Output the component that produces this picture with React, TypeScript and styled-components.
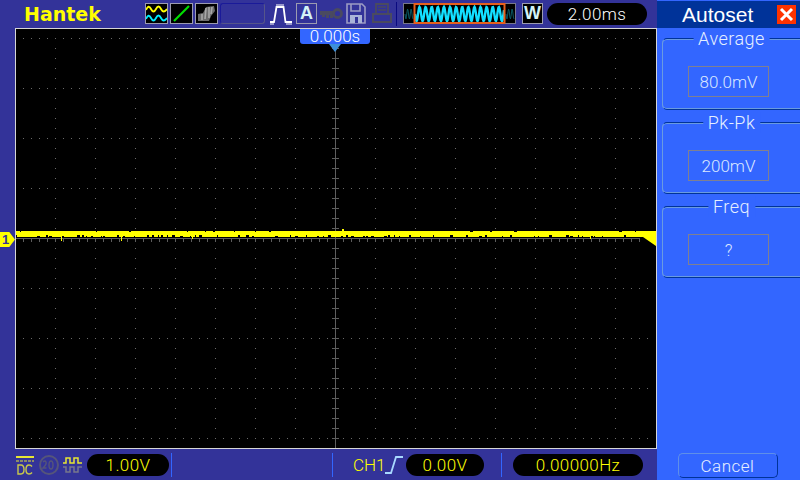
import React from 'react'
import styled, { createGlobalStyle } from 'styled-components'

const GlobalStyle = createGlobalStyle`
  html, body {
    margin: 0;
    padding: 0;
    background: #333399;
  }
  #root {
    width: 800px;
    height: 480px;
    overflow: hidden;
  }
`

const Screen = styled.div`
  display: flex;
  width: 800px;
  height: 480px;
  background: #333399;
  font-family: Roboto, sans-serif;
  font-weight: 300;
`

const Main = styled.div`
  display: flex;
  flex-direction: column;
  width: 657px;
`

const TopBar = styled.div`
  display: flex;
  align-items: center;
  height: 28px;
  padding: 0 0 1px 24px;
  box-sizing: border-box;
`

const Logo = styled.div`
  width: 121px;
  font-family: 'DejaVu Sans', sans-serif;
  font-weight: 700;
  font-size: 19px;
  color: #ffff00;
`

const IconTile = styled.div`
  display: flex;
  box-sizing: border-box;
  width: 23px;
  height: 21px;
  margin-right: 2px;
  background: #000;
  border: 1px solid #9c9cb0;
`

const EmptyButton = styled.div`
  box-sizing: border-box;
  width: 45px;
  height: 21px;
  margin-right: 5px;
  border: 1px solid #1a1a99;
  border-right-color: #55558a;
  border-bottom-color: #55558a;
  border-radius: 3px;
`

const ToolIcon = styled.svg<{ $gap?: number }>`
  display: block;
  flex: none;
  margin-right: ${({ $gap }) => $gap ?? 0}px;
`

const LetterTile = styled.div<{ $gap: number; $dark?: boolean }>`
  box-sizing: border-box;
  display: flex;
  align-items: center;
  justify-content: center;
  width: 21px;
  height: 21px;
  margin-right: ${({ $gap }) => $gap}px;
  font-family: 'Liberation Sans', sans-serif;
  font-weight: 700;
  font-size: 18px;
  color: #d4f2f7;
  background: ${({ $dark }) => ($dark ? '#000' : '#333399')};
  border: 1px solid #9c9cb0;
`

const Divider = styled.div<{ $gap: number; $before?: number; $bright?: boolean }>`
  flex: none;
  width: 1px;
  height: 24px;
  margin-left: ${({ $before }) => $before ?? 0}px;
  margin-right: ${({ $gap }) => $gap}px;
  background: ${({ $bright }) => ($bright ? '#3366ff' : '#0a0a80')};
`

const Readout = styled.div<{ $w: number; $color: string }>`
  flex: none;
  display: flex;
  align-items: center;
  justify-content: center;
  box-sizing: border-box;
  width: ${({ $w }) => $w}px;
  height: 22px;
  border-radius: 11px;
  background: #000;
  color: ${({ $color }) => $color};
  font-size: 17px;
  letter-spacing: 0.4px;
`

const ScopeRow = styled.div`
  position: relative;
  display: flex;
  flex: 1;
  padding-left: 15px;
`

const ScopeFrame = styled.div`
  position: relative;
  box-sizing: border-box;
  width: 642px;
  height: 421px;
  background: #000;
  border: 1px solid #d6d6d6;
`

const TimeTag = styled.div`
  position: absolute;
  left: 284px;
  top: 0;
  box-sizing: border-box;
  display: flex;
  align-items: center;
  justify-content: center;
  width: 70px;
  height: 15px;
  background: #3366ff;
  border-radius: 0 0 3px 3px;
  color: #fff;
  font-size: 17px;
  line-height: 15px;
`

const TimeArrow = styled.div`
  position: absolute;
  left: 313px;
  top: 15px;
  width: 0;
  height: 0;
  border-left: 6px solid transparent;
  border-right: 6px solid transparent;
  border-top: 8px solid #3d8fd9;
`

const ChannelTag = styled.div`
  position: absolute;
  left: 0;
  top: 204px;
  display: flex;
  align-items: center;
  box-sizing: border-box;
  width: 15px;
  height: 15px;
  padding-left: 2px;
  background: #ffff00;
  clip-path: polygon(0 0, 62% 0, 100% 50%, 62% 100%, 0 100%);
  color: #333399;
  font-family: 'Liberation Sans', sans-serif;
  font-weight: 700;
  font-size: 13px;
`

const BottomBar = styled.div`
  display: flex;
  align-items: center;
  height: 31px;
  padding-left: 16px;
  box-sizing: border-box;
`

const SourceLabel = styled.div`
  width: 32px;
  color: #ffff00;
  font-size: 17px;
`

const SidePanel = styled.div`
  display: flex;
  flex-direction: column;
  width: 143px;
  background: #3366ff;
  color: #ffffff;
`

const PanelHead = styled.div`
  display: flex;
  align-items: center;
  box-sizing: border-box;
  height: 28px;
  padding-left: 25px;
  background: #003399;
  border-top: 1px solid #3366ff;
`

const PanelTitle = styled.div`
  width: 95px;
  font-family: 'Liberation Sans', sans-serif;
  font-size: 21px;
  color: #fff;
`

const CloseButton = styled.div`
  display: flex;
  width: 19px;
  height: 19px;
  background: #ff3300;
`

const Groups = styled.div`
  display: flex;
  flex-direction: column;
  gap: 12px;
  padding: 10px 0 0 5px;
`

const Group = styled.div`
  position: relative;
  box-sizing: border-box;
  height: 72px;
  padding: 27px 0 0 25px;
  border: 1px solid #003399;
  border-left-color: #6a9be0;
  border-right: none;
  border-radius: 5px 0 0 5px;
  box-shadow: 0 1px 0 #6a9be0 inset, 0 -1px 0 #6a9be0 inset;
`

const GroupLegend = styled.div`
  position: absolute;
  left: 50%;
  top: -11px;
  transform: translateX(-50%);
  padding: 0 5px;
  background: #3366ff;
  font-size: 18px;
  line-height: 21px;
  letter-spacing: 0.5px;
  white-space: nowrap;
  color: #e6f0ff;
`

const ValueBox = styled.div`
  display: flex;
  align-items: center;
  justify-content: center;
  box-sizing: border-box;
  width: 81px;
  height: 31px;
  border: 1px solid #808090;
  color: #dbe8ff;
  font-size: 17px;
`

const CancelButton = styled.div`
  display: flex;
  align-items: center;
  justify-content: center;
  align-self: center;
  box-sizing: border-box;
  width: 100px;
  height: 25px;
  margin: auto 0 2px -2px;
  border: 1px solid #5f8fe8;
  border-right-color: #003399;
  border-bottom-color: #003399;
  border-radius: 5px;
  color: #e6f0ff;
  font-size: 17px;
  letter-spacing: 0.5px;
`

// repeatable noise for the trace
const noise = (i: number) => {
  const v = Math.sin(i * 12.9898 + 4.1) * 43758.5453
  return v - Math.floor(v)
}

const range = (from: number, to: number, step: number) => {
  const out: number[] = []
  for (let v = from; v <= to; v += step) out.push(v)
  return out
}

const gridDots = () => {
  const d: string[] = []
  for (const y of range(38, 438, 50)) {
    for (const x of range(23, 650, 8)) d.push(`M${x} ${y}h1v1h-1z`)
  }
  for (const x of range(55, 615, 40)) {
    for (const y of range(48, 438, 10)) d.push(`M${x} ${y}h1v1h-1z`)
  }
  return d.join('')
}

const traceNotches = () => {
  const d: string[] = []
  let x = 16
  while (x < 640) {
    const a = noise(x)
    const w = 1 + Math.floor(noise(x + 500) * 3)
    if (a > 0.72) d.push(`M${x} 235h${w}v2h-${w}z`)
    else if (a > 0.5) d.push(`M${x} 236h${w}v1h-${w}z`)
    else if (a < 0.1) d.push(`M${x} 231h${w}v1h-${w}z`)
    x += w + 1 + Math.floor(noise(x + 900) * 4)
  }
  return d.join('')
}

const ScopeGrid = () => (
  <svg
    width={640}
    height={419}
    viewBox="16 29 640 419"
    style={{ display: 'block' }}
    shapeRendering="crispEdges"
  >
    <path d={gridDots()} fill="#6a6a6a" />
    {/* centre axes */}
    <path d="M335 29v419" stroke="#5e5e5e" strokeWidth="1" fill="none" transform="translate(.5 0)" />
    <path
      d={range(38, 438, 10).map((y) => `M332 ${y}h7`).join('')}
      stroke="#5e5e5e"
      transform="translate(0 .5)"
      fill="none"
    />
    <path d="M16 238h624" stroke="#5c5c5c" fill="none" transform="translate(0 .5)" />
    <path
      d={range(23, 640, 8).map((x) => `M${x} 238v4`).join('')}
      stroke="#5c5c5c"
      transform="translate(.5 0)"
      fill="none"
    />
    {/* ch1 trace */}
    <path d="M16 231h624v6h-624z" fill="#ffff00" />
    <path d={traceNotches()} fill="#000" />
    <path d="M342 229h2v2h-2zM61 237h1v4h-1zM121 237h1v4h-1zM192 237h1v2h-1zM590 237h1v2h-1z" fill="#ffff00" />
    {/* trigger level marker */}
    <path d="M640 231h16v15L643 237h-3z" fill="#ffff00" shapeRendering="auto" />
  </svg>
)

const SineTile = () => (
  <IconTile>
    <svg width={21} height={19} viewBox="0 0 21 19">
      <path d="M0 6 Q2.5 0 5 5 T10 5 T15 5 T21 5" fill="none" stroke="#ffff00" strokeWidth="1.8" />
      <path d="M0 15 Q2.5 9 5 14 T10 14 T15 14 T21 14" fill="none" stroke="#00eeff" strokeWidth="1.8" />
    </svg>
  </IconTile>
)

const XYTile = () => (
  <IconTile>
    <svg width={21} height={19} viewBox="0 0 21 19">
      <path d="M3 17 L18 2" stroke="#00e000" strokeWidth="2.2" fill="none" />
    </svg>
  </IconTile>
)

const PersistTile = () => (
  <IconTile>
    <svg width={21} height={19} viewBox="0 0 21 19">
      <path d="M2 17 L2 10 L7 9 L10 3 L18 2 L19 7 L15 12 L13 17 Z" fill="#6e6e6e" />
      <path d="M10 4 L9 15 M13 3 L13 14 M6 10 L6 16 M16 3 L15 10" stroke="#a8a8a8" strokeWidth="1.6" fill="none" />
    </svg>
  </IconTile>
)

const PulseIcon = () => (
  <ToolIcon $gap={4} width={22} height={24} viewBox="0 0 22 24">
    <path d="M0 20h4L6.500 5h7L15.500 20h6.500" fill="none" stroke="#fff" strokeWidth="1.8" />
    <path d="M7 5V2M9 5V2M11 5V2M13 5V2M1 20v3M3 20v3M17 20v3M19 20v3M21 20v3" stroke="#fff" strokeWidth="1" />
  </ToolIcon>
)

const KeyIcon = () => (
  <ToolIcon $gap={3} width={23} height={14} viewBox="0 0 23 14">
    <path d="M0 4h14v4h-1v3h-3v-3h-1v3h-3v-3h-1v2h-3v-2h-2z" fill="#4a4a60" />
    <circle cx="17.500" cy="6.500" r="4" fill="none" stroke="#4a4a60" strokeWidth="2.800" />
  </ToolIcon>
)

const SaveIcon = () => (
  <ToolIcon $gap={6} width={20} height={21} viewBox="0 0 20 21">
    <path d="M1 1h15l3 3v16H1z" fill="none" stroke="#9c9cc4" strokeWidth="1.6" />
    <path d="M5 1v7h9V1" fill="none" stroke="#9c9cc4" strokeWidth="1.6" />
    <path d="M4 12h12v8H4z" fill="#aab4d8" />
    <path d="M9 14h3v6H9z" fill="#333399" />
  </ToolIcon>
)

const PrintIcon = () => (
  <ToolIcon $gap={4} width={20} height={21} viewBox="0 0 20 21">
    <path d="M4 1h12v10H4z" fill="none" stroke="#4a4a60" strokeWidth="1.800" />
    <path d="M6 4h8M6 7h8" stroke="#4a4a60" strokeWidth="1.400" />
    <path d="M1 11h18v8H1z" fill="none" stroke="#4a4a60" strokeWidth="2.200" />
  </ToolIcon>
)

const sinePoints = (from: number, to: number, period: number, amp: number) =>
  range(from, to, 0.5)
    .map((x) => `${x},${(11 + Math.sin(((x - from) / period) * Math.PI * 2) * amp).toFixed(1)}`)
    .join(' ')

const WaveOverview = () => (
  <ToolIcon $gap={6} width={113} height={21} viewBox="0 0 113 21">
    <rect x="0.500" y="0.500" width="112" height="20" fill="#000" stroke="#77778c" />
    <polyline points={sinePoints(2, 10, 3.5, 5)} fill="none" stroke="#0a5a66" />
    <polyline points={sinePoints(103, 111, 3.5, 5)} fill="none" stroke="#0a5a66" />
    <polyline points={sinePoints(12, 101, 6.1, 7)} fill="none" stroke="#12dfff" strokeWidth="2.400" />
    <rect x="11.500" y="1" width="90" height="19" fill="none" stroke="#e8601c" strokeWidth="2" />
  </ToolIcon>
)

const CouplingIcon = () => (
  <ToolIcon $gap={5} width={18} height={20} viewBox="0 0 18 20">
    <path d="M0 2h18" stroke="#e6e633" strokeWidth="2" />
    <path d="M0 6h18" stroke="#e6e633" strokeWidth="1" strokeDasharray="3 1" />
    <path d="M2 10v9h3q3 0 3-4.500T5 10zM16 11.500q-1-1.500-3-1.500q-3 0-3 4.500t3 4.500q2 0 3-1.500" fill="none" stroke="#c9c94a" strokeWidth="1.400" />
  </ToolIcon>
)

const BandwidthIcon = () => (
  <ToolIcon $gap={4} width={20} height={20} viewBox="0 0 20 20">
    <circle cx="10" cy="10" r="9" fill="none" stroke="#55557a" strokeWidth="2" />
    <path d="M4 7q2-2 3 0t-3 6h3.500M10 10q0-4 2-4t2 4t-2 4t-2-4" fill="none" stroke="#55557a" strokeWidth="1.400" />
  </ToolIcon>
)

const InvertIcon = () => (
  <ToolIcon $gap={5} width={19} height={18} viewBox="0 0 19 18">
    <path d="M0 7h3V2h4v5h4V2h4v5h4" fill="none" stroke="#e6e633" strokeWidth="1.500" />
    <path d="M0 11h3v5h4v-5h4v5h4v-5h4" fill="none" stroke="#77778c" strokeWidth="1.500" />
  </ToolIcon>
)

const EdgeIcon = () => (
  <ToolIcon $gap={3} width={18} height={20} viewBox="0 0 18 20">
    <path d="M0 18h6L11 2h7" fill="none" stroke="#a8d8ff" strokeWidth="1.800" />
  </ToolIcon>
)

const groups = [
  { label: 'Average', value: '80.0mV' },
  { label: 'Pk-Pk', value: '200mV' },
  { label: 'Freq', value: '?' },
]

export default function App() {
  return (
    <>
      <GlobalStyle />
      <Screen>
        <Main>
          <TopBar>
            <Logo>Hantek</Logo>
            <SineTile />
            <XYTile />
            <PersistTile />
            <EmptyButton />
            <PulseIcon />
            <LetterTile $gap={3}>A</LetterTile>
            <KeyIcon />
            <SaveIcon />
            <PrintIcon />
            <Divider $gap={6} />
            <WaveOverview />
            <LetterTile $gap={4} $dark>W</LetterTile>
            <Readout $w={100} $color="#ffffff">2.00ms</Readout>
          </TopBar>
          <ScopeRow>
            <ChannelTag>1</ChannelTag>
            <ScopeFrame>
              <ScopeGrid />
              <TimeTag>0.000s</TimeTag>
              <TimeArrow />
            </ScopeFrame>
          </ScopeRow>
          <BottomBar>
            <CouplingIcon />
            <BandwidthIcon />
            <InvertIcon />
            <Readout $w={82} $color="#ffff00">1.00V</Readout>
            <Divider $before={2} $gap={160} $bright />
            <Divider $gap={20} $bright />
            <SourceLabel>CH1</SourceLabel>
            <EdgeIcon />
            <Readout $w={78} $color="#ffff00">0.00V</Readout>
            <Divider $before={17} $gap={11} $bright />
            <Readout $w={130} $color="#ffff00">0.00000Hz</Readout>
          </BottomBar>
        </Main>
        <SidePanel>
          <PanelHead>
            <PanelTitle>Autoset</PanelTitle>
            <CloseButton>
              <svg width={19} height={19} viewBox="0 0 19 19">
                <path d="M4 4L15 15M15 4L4 15" stroke="#fff" strokeWidth="3" />
              </svg>
            </CloseButton>
          </PanelHead>
          <Groups>
            {groups.map((g) => (
              <Group key={g.label}>
                <GroupLegend>{g.label}</GroupLegend>
                <ValueBox>{g.value}</ValueBox>
              </Group>
            ))}
          </Groups>
          <CancelButton>Cancel</CancelButton>
        </SidePanel>
      </Screen>
    </>
  )
}
